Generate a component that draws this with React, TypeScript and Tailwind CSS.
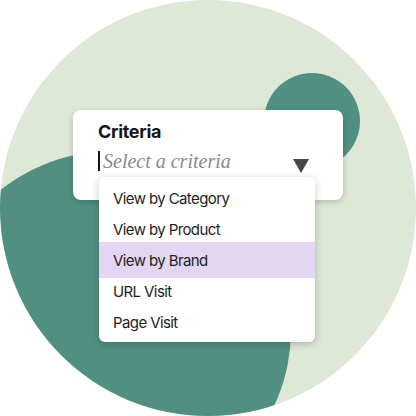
import React from "react";

const items = ["View by Category", "View by Product", "View by Brand", "URL Visit", "Page Visit"];

export default function App() {
  return (
    <div className="relative w-[416px] h-[416px] overflow-hidden bg-white">
      <svg className="absolute inset-0" width="416" height="416" viewBox="0 0 416 416">
        <defs>
          <clipPath id="outer">
            <circle cx="208" cy="208" r="208" />
          </clipPath>
        </defs>
        <circle cx="208" cy="208" r="208" fill="#dee8d6" />
        <g clipPath="url(#outer)">
          <circle cx="112" cy="330" r="179" fill="#519080" />
          <circle cx="312" cy="121" r="48" fill="#519080" />
        </g>
      </svg>
      <div className="relative pt-[110px] pl-[73px]">
        <div className="relative w-[270px] h-[90px] bg-white rounded-[8px] shadow-[0_2px_6px_rgba(0,0,0,0.18)] pl-[25px] pt-[10px]">
          <div className="text-[18px] leading-[24px] font-bold tracking-[-0.3px] text-[#151515] [font-family:Inter,sans-serif]">Criteria</div>
          <div className="flex items-center mt-[4px] h-[26px]">
            <div className="w-[2px] h-[20px] bg-[#111]" />
            <div className="ml-[3px] text-[20px] italic text-[#8a8a8a] [font-family:'Liberation_Serif',serif]">Select a criteria</div>
            <svg className="ml-auto mr-[34px] mt-[10px]" width="16" height="14" viewBox="0 0 16 14">
              <polygon points="0,0 16,0 8,14" fill="#474747" />
            </svg>
          </div>
          <div className="absolute left-[26px] top-[67px] w-[216px] bg-white rounded-[6px] shadow-[0_2px_8px_rgba(0,0,0,0.22)] pt-[7px] pb-[3px]">
            {items.map((t, i) => (
              <div key={t} className="relative h-[31px] flex items-center pl-[14px]">
                {i === 2 && <div className="absolute inset-x-0 -top-[4px] -bottom-[1px] bg-[#e2d6f2]" />}
                <span className="relative text-[15px] tracking-[-0.6px] text-[#1e1e1e] [font-family:Inter,sans-serif]">{t}</span>
              </div>
            ))}
          </div>
        </div>
      </div>
    </div>
  );
}
